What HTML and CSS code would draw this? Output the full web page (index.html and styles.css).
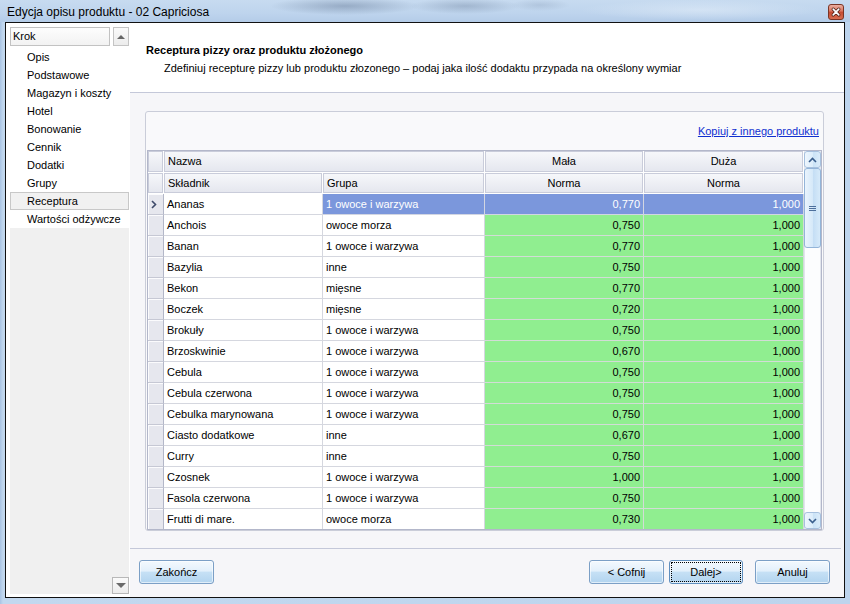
FILE: index.html
```html
<!DOCTYPE html>
<html lang="pl">
<head>
<meta charset="utf-8">
<title>Edycja opisu produktu - 02 Capriciosa</title>
<link rel="stylesheet" href="styles.css">
</head>
<body>
<div class="window">
  <div class="titlebar">
    <span class="title">Edycja opisu produktu - 02 Capriciosa</span>
    <svg class="close" width="16" height="16" viewBox="0 0 16 16">
      <defs>
        <linearGradient id="cg" x1="0" y1="0" x2="0" y2="1">
          <stop offset="0" stop-color="#ecb4a6"/>
          <stop offset="0.45" stop-color="#d9735d"/>
          <stop offset="0.5" stop-color="#c44a31"/>
          <stop offset="1" stop-color="#da7052"/>
        </linearGradient>
      </defs>
      <rect x="0.5" y="0.5" width="15" height="15" rx="2.5" fill="url(#cg)" stroke="#7a3526"/>
      <path d="M5.2 5.2 L10.8 10.8 M10.8 5.2 L5.2 10.8" stroke="#4a1c12" stroke-width="3.2" stroke-linecap="round"/>
      <path d="M5.2 5.2 L10.8 10.8 M10.8 5.2 L5.2 10.8" stroke="#fff" stroke-width="1.7" stroke-linecap="round"/>
    </svg>
  </div>
  <div class="client">
    <div class="steps">
      <div class="steps-head">
        <div class="krok">Krok</div>
        <div class="sq-btn"><span class="tri-up"></span></div>
      </div>
      <div class="step-list">
        <div class="step">Opis</div>
        <div class="step">Podstawowe</div>
        <div class="step">Magazyn i koszty</div>
        <div class="step">Hotel</div>
        <div class="step">Bonowanie</div>
        <div class="step">Cennik</div>
        <div class="step">Dodatki</div>
        <div class="step">Grupy</div>
        <div class="step sel">Receptura</div>
        <div class="step">Wartości odżywcze</div>
      </div>
      <div class="steps-rest">
        <div class="sq-btn down"><span class="tri-down"></span></div>
      </div>
    </div>
    <div class="main">
      <div class="header">
        <div class="h-title">Receptura pizzy oraz produktu złożonego</div>
        <div class="h-sub">Zdefiniuj recepturę pizzy lub produktu złozonego – podaj jaka ilość dodaktu przypada na określony wymiar</div>
      </div>
      <div class="body">
        <div class="box-wrap">
          <div class="box">
            <div class="linkrow"><a class="link" href="#">Kopiuj z innego produktu</a></div>
            <div class="grid">
              <div class="table">
                <div class="hc"></div><div class="hc span2">Nazwa</div><div class="hc ctr">Mała</div><div class="hc ctr">Duża</div>
                <div class="hc"></div><div class="hc">Składnik</div><div class="hc">Grupa</div><div class="hc ctr">Norma</div><div class="hc ctr">Norma</div>

                <div class="rh"><svg width="6" height="9" viewBox="0 0 6 9"><path d="M1 1 L4.5 4.5 L1 8" fill="none" stroke="#3e4a6a" stroke-width="1.6"/></svg></div><div class="c">Ananas</div><div class="c sel">1 owoce i warzywa</div><div class="c num sel">0,770</div><div class="c num sel">1,000</div>
                <div class="rh"></div><div class="c">Anchois</div><div class="c">owoce morza</div><div class="c num g">0,750</div><div class="c num g">1,000</div>
                <div class="rh"></div><div class="c">Banan</div><div class="c">1 owoce i warzywa</div><div class="c num g">0,770</div><div class="c num g">1,000</div>
                <div class="rh"></div><div class="c">Bazylia</div><div class="c">inne</div><div class="c num g">0,750</div><div class="c num g">1,000</div>
                <div class="rh"></div><div class="c">Bekon</div><div class="c">mięsne</div><div class="c num g">0,770</div><div class="c num g">1,000</div>
                <div class="rh"></div><div class="c">Boczek</div><div class="c">mięsne</div><div class="c num g">0,720</div><div class="c num g">1,000</div>
                <div class="rh"></div><div class="c">Brokuły</div><div class="c">1 owoce i warzywa</div><div class="c num g">0,750</div><div class="c num g">1,000</div>
                <div class="rh"></div><div class="c">Brzoskwinie</div><div class="c">1 owoce i warzywa</div><div class="c num g">0,670</div><div class="c num g">1,000</div>
                <div class="rh"></div><div class="c">Cebula</div><div class="c">1 owoce i warzywa</div><div class="c num g">0,750</div><div class="c num g">1,000</div>
                <div class="rh"></div><div class="c">Cebula czerwona</div><div class="c">1 owoce i warzywa</div><div class="c num g">0,750</div><div class="c num g">1,000</div>
                <div class="rh"></div><div class="c">Cebulka marynowana</div><div class="c">1 owoce i warzywa</div><div class="c num g">0,750</div><div class="c num g">1,000</div>
                <div class="rh"></div><div class="c">Ciasto dodatkowe</div><div class="c">inne</div><div class="c num g">0,670</div><div class="c num g">1,000</div>
                <div class="rh"></div><div class="c">Curry</div><div class="c">inne</div><div class="c num g">0,750</div><div class="c num g">1,000</div>
                <div class="rh"></div><div class="c">Czosnek</div><div class="c">1 owoce i warzywa</div><div class="c num g">1,000</div><div class="c num g">1,000</div>
                <div class="rh"></div><div class="c">Fasola czerwona</div><div class="c">1 owoce i warzywa</div><div class="c num g">0,750</div><div class="c num g">1,000</div>
                <div class="rh"></div><div class="c">Frutti di mare.</div><div class="c">owoce morza</div><div class="c num g">0,730</div><div class="c num g">1,000</div>
              </div>
              <div class="vscroll">
                <div class="sb-btn"><svg width="9" height="6" viewBox="0 0 9 6"><path d="M1 5 L4.5 1.5 L8 5" fill="none" stroke="#3a5e8c" stroke-width="1.6"/></svg></div>
                <div class="sb-thumb"><span class="grip"></span></div>
                <div class="sb-track"></div>
                <div class="sb-btn"><svg width="9" height="6" viewBox="0 0 9 6"><path d="M1 1 L4.5 4.5 L8 1" fill="none" stroke="#3a5e8c" stroke-width="1.6"/></svg></div>
              </div>
            </div>
          </div>
        </div>
        <div class="footer">
          <button class="btn">Zakończ</button>
          <span class="spacer"></span>
          <button class="btn">&lt; Cofnij</button>
          <button class="btn focus">Dalej&gt;</button>
          <button class="btn last">Anuluj</button>
        </div>
      </div>
    </div>
  </div>
</div>
</body>
</html>
```

FILE: styles.css
```css
html, body {
  margin: 0;
  padding: 0;
}
body {
  width: 850px;
  height: 604px;
  overflow: hidden;
  background: linear-gradient(90deg, #a9c4e4 0, #c2d8ef 3px, #bdd4ed 100%);
  font-family: "Liberation Sans", Arial, sans-serif;
  font-size: 11px;
  color: #000;
}
.window {
  display: flex;
  flex-direction: column;
  width: 850px;
  height: 604px;
}
.titlebar {
  height: 22px;
  display: flex;
  align-items: flex-start;
  background:
    radial-gradient(ellipse 75px 9px at 345px 6px, rgba(90, 110, 140, 0.42), rgba(90, 110, 140, 0) 100%),
    radial-gradient(ellipse 55px 8px at 465px 6px, rgba(90, 110, 140, 0.32), rgba(90, 110, 140, 0) 100%),
    radial-gradient(ellipse 30px 6px at 540px 5px, rgba(110, 130, 160, 0.22), rgba(110, 130, 160, 0) 100%),
    radial-gradient(ellipse 120px 10px at 700px 10px, rgba(230, 240, 250, 0.5), rgba(230, 240, 250, 0) 100%),
    linear-gradient(180deg, #c7dbf0 0%, #bed4ed 60%, #b4cce8 100%);
}
.title {
  font-size: 12px;
  line-height: 22px;
  padding: 1px 0 0 7px;
  color: #000;
}
.close {
  margin-left: auto;
  margin-top: 4px;
  margin-right: 6px;
  display: block;
}
.client {
  margin-left: 5px;
  width: 840px;
  height: 576px;
  box-sizing: border-box;
  border: 1px solid #111;
  background: #fff;
  display: flex;
}

/* left steps panel */
.steps {
  width: 119px;
  margin: 4px 1px 3px 4px;
  display: flex;
  flex-direction: column;
  background: #f0f0f0;
}
.steps-head {
  display: flex;
  height: 19px;
  gap: 3px;
  background: #fff;
}
.krok {
  width: 100px;
  box-sizing: border-box;
  border: 1px solid #c2c2c2;
  background: linear-gradient(#fdfdfd, #f2f2f2);
  line-height: 17px;
  padding-left: 2px;
}
.sq-btn {
  width: 16px;
  height: 19px;
  box-sizing: border-box;
  border: 1px solid #c4c4c4;
  background: linear-gradient(#fafafa, #ececec);
  display: flex;
  align-items: center;
  justify-content: center;
}
.sq-btn.down {
  width: 17px;
  height: 17px;
  border-color: #b8b8b8;
}
.tri-up {
  width: 0;
  height: 0;
  border-left: 4px solid transparent;
  border-right: 4px solid transparent;
  border-bottom: 4px solid #666;
}
.tri-down {
  width: 0;
  height: 0;
  border-left: 5px solid transparent;
  border-right: 5px solid transparent;
  border-top: 5px solid #6a6a6a;
}
.step-list {
  background: #fff;
  padding-top: 2px;
}
.step {
  height: 18px;
  line-height: 18px;
  padding-left: 17px;
}
.step.sel {
  background: #f1f1f1;
  box-shadow: inset 0 0 0 1px #c8c8c8;
}
.steps-rest {
  flex: 1;
  display: flex;
  align-items: flex-end;
  justify-content: flex-end;
}

/* main */
.main {
  flex: 1;
  display: flex;
  flex-direction: column;
}
.header {
  height: 49px;
  padding: 20px 0 0 16px;
  background: #fff;
  border-bottom: 1px solid #c4c8d9;
}
.h-title {
  font-weight: bold;
  line-height: 14px;
}
.h-sub {
  line-height: 14px;
  margin-top: 4px;
  padding-left: 18px;
}
.body {
  flex: 1;
  background: #f6f6f9;
  display: flex;
  flex-direction: column;
}
.box-wrap {
  padding: 18px 20px 0 15px;
}
.box {
  height: 418px;
  border: 1px solid #cacdd9;
  border-radius: 3px;
  background: #f9f9fb;
  display: flex;
  flex-direction: column;
}
.linkrow {
  height: 38px;
  display: flex;
  align-items: center;
  justify-content: flex-end;
  padding-right: 4px;
}
.link {
  color: #1030d0;
  text-decoration: underline;
}

/* grid */
.grid {
  margin: 0 1px;
  height: 380px;
  box-sizing: border-box;
  border: 1px solid #b3b7ca;
  background: #fff;
  display: flex;
  overflow: hidden;
}
.table {
  width: 656px;
  display: grid;
  grid-template-columns: 16px 159px 162px 159px 160px;
  grid-template-rows: 22px 21px;
  grid-auto-rows: 21px;
}
.hc {
  box-sizing: border-box;
  border-right: 1px solid #fff;
  border-bottom: 1px solid #fff;
  background: linear-gradient(#f7f8fb, #e4e6ee);
  box-shadow: inset 0 0 0 1px #c9ccda;
  line-height: 20px;
  padding-left: 4px;
  white-space: nowrap;
}
.hc.span2 {
  grid-column: span 2;
}
.hc.ctr {
  text-align: center;
  padding-left: 0;
}
.rh {
  box-sizing: border-box;
  background: #e6e7ee;
  border-right: 1px solid #b3b7c8;
  border-bottom: 1px solid #c6c8d4;
  box-shadow: inset 1px 1px 0 #fbfbfd;
  display: flex;
  align-items: center;
  padding-left: 3px;
}
.c {
  box-sizing: border-box;
  border-right: 1px solid #d5d7df;
  border-bottom: 1px solid #d5d7df;
  line-height: 20px;
  padding: 0 3px;
  white-space: nowrap;
  overflow: hidden;
}
.c.num {
  text-align: right;
}
.c.g {
  background: #90ee90;
  border-color: #d2dcd6;
}
.c.sel {
  background: #7b97dc;
  color: #fff;
  border-color: #d2d6e2;
}

/* scrollbar */
.vscroll {
  width: 17px;
  display: flex;
  flex-direction: column;
  background: #fcfdfe;
  box-shadow: inset 1px 0 #e2e5ed, inset -1px 0 #e2e5ed;
}
.sb-btn {
  height: 17px;
  flex: none;
  box-sizing: border-box;
  border: 1px solid #a6c0de;
  border-radius: 3px;
  background: linear-gradient(90deg, #eef6fd, #dcedfb 50%, #c9e2f6 51%, #dbecfa);
  display: flex;
  align-items: center;
  justify-content: center;
}
.sb-thumb {
  height: 80px;
  flex: none;
  box-sizing: border-box;
  border: 1px solid #93b4d8;
  border-radius: 3px;
  background: linear-gradient(90deg, #eaf4fd, #d6e9f9 50%, #c3ddf4 51%, #d6eafa);
  display: flex;
  align-items: center;
  justify-content: center;
}
.grip {
  width: 7px;
  height: 5px;
  background: linear-gradient(#4d6f9c 0 1px, transparent 1px 2px, #4d6f9c 2px 3px, transparent 3px 4px, #4d6f9c 4px 5px);
}
.sb-track {
  flex: 1;
}

/* footer */
.footer {
  margin-top: 17px;
  margin-right: 3px;
  border-top: 1px solid #c4c8d9;
  padding: 11px 11px 0 9px;
  display: flex;
}
.spacer {
  flex: 1;
}
.btn {
  width: 75px;
  height: 24px;
  box-sizing: border-box;
  margin: 0;
  padding: 0;
  border: 1px solid #7b9fc6;
  border-radius: 3px;
  background: linear-gradient(#f3f9fe 0%, #e3f0fb 45%, #c5e0f5 52%, #b2d4ef 100%);
  box-shadow: inset 0 0 0 1px rgba(255, 255, 255, 0.6);
  font-family: "Liberation Sans", Arial, sans-serif;
  font-size: 11px;
  color: #000;
  text-align: center;
}
.btn.focus {
  width: 74px;
  margin-left: 5px;
  outline: 1px dotted #000;
  outline-offset: -3px;
  border-color: #5f8fbf;
}
.btn.last {
  margin-left: 12px;
}
```
